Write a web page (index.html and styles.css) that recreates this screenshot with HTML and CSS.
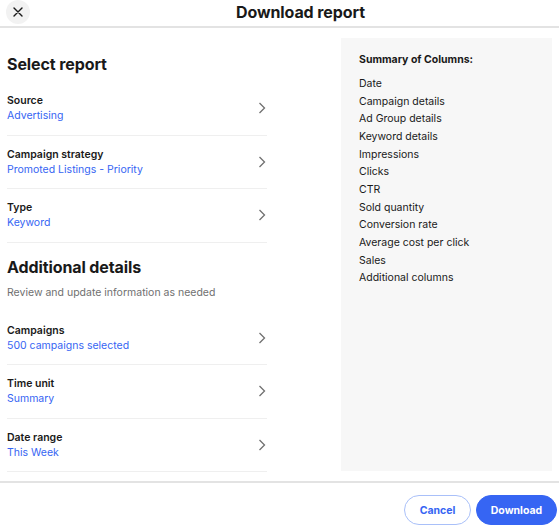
FILE: index.html
```html
<!DOCTYPE html>
<html lang="en">
<head>
    <meta charset="UTF-8">
    <meta name="viewport" content="width=device-width, initial-scale=1.0">
    <title>Download report</title>
    <link rel="stylesheet" href="styles.css">
</head>
<body>
    <header class="dialog-header">
        <button class="close-btn" aria-label="Close">
            <svg width="10" height="10" viewBox="0 0 10 10">
                <path d="M1 1 L9 9 M9 1 L1 9" stroke="#191919" stroke-width="1.4" stroke-linecap="round" fill="none"/>
            </svg>
        </button>
        <h1 class="dialog-title">Download report</h1>
    </header>

    <main class="dialog-body">
        <section class="settings">
            <h2 class="section-title">Select report</h2>

            <div class="setting-row">
                <div class="setting-text">
                    <div class="setting-label">Source</div>
                    <div class="setting-value">Advertising</div>
                </div>
                <svg class="chevron" width="8" height="12" viewBox="0 0 8 12"><path d="M1.5 1 L6.5 6 L1.5 11" /></svg>
            </div>

            <div class="setting-row">
                <div class="setting-text">
                    <div class="setting-label">Campaign strategy</div>
                    <div class="setting-value">Promoted Listings - Priority</div>
                </div>
                <svg class="chevron" width="8" height="12" viewBox="0 0 8 12"><path d="M1.5 1 L6.5 6 L1.5 11" /></svg>
            </div>

            <div class="setting-row">
                <div class="setting-text">
                    <div class="setting-label">Type</div>
                    <div class="setting-value">Keyword</div>
                </div>
                <svg class="chevron" width="8" height="12" viewBox="0 0 8 12"><path d="M1.5 1 L6.5 6 L1.5 11" /></svg>
            </div>

            <h2 class="section-title additional">Additional details</h2>
            <p class="section-hint">Review and update information as needed</p>

            <div class="setting-row">
                <div class="setting-text">
                    <div class="setting-label">Campaigns</div>
                    <div class="setting-value">500 campaigns selected</div>
                </div>
                <svg class="chevron" width="8" height="12" viewBox="0 0 8 12"><path d="M1.5 1 L6.5 6 L1.5 11" /></svg>
            </div>

            <div class="setting-row">
                <div class="setting-text">
                    <div class="setting-label">Time unit</div>
                    <div class="setting-value">Summary</div>
                </div>
                <svg class="chevron" width="8" height="12" viewBox="0 0 8 12"><path d="M1.5 1 L6.5 6 L1.5 11" /></svg>
            </div>

            <div class="setting-row">
                <div class="setting-text">
                    <div class="setting-label">Date range</div>
                    <div class="setting-value">This Week</div>
                </div>
                <svg class="chevron" width="8" height="12" viewBox="0 0 8 12"><path d="M1.5 1 L6.5 6 L1.5 11" /></svg>
            </div>
        </section>

        <aside class="summary">
            <div class="summary-title">Summary of Columns:</div>
            <ul class="summary-list">
                <li>Date</li>
                <li>Campaign details</li>
                <li>Ad Group details</li>
                <li>Keyword details</li>
                <li>Impressions</li>
                <li>Clicks</li>
                <li>CTR</li>
                <li>Sold quantity</li>
                <li>Conversion rate</li>
                <li>Average cost per click</li>
                <li>Sales</li>
                <li>Additional columns</li>
            </ul>
        </aside>
    </main>

    <footer class="dialog-footer">
        <button class="btn btn-secondary">Cancel</button>
        <button class="btn btn-primary">Download</button>
    </footer>
</body>
</html>
```

FILE: styles.css
```css
* {
    margin: 0;
    padding: 0;
    box-sizing: border-box;
}

body {
    font-family: Inter, "Liberation Sans", sans-serif;
    background: white;
    color: #191919;
    width: 559px;
    height: 529px;
    overflow: hidden;
}

/* Header */
.dialog-header {
    height: 28px;
    display: flex;
    align-items: flex-start;
    border-bottom: 2px solid #e3e3e3;
}

.close-btn {
    width: 24px;
    height: 24px;
    margin-left: 6px;
    border: none;
    border-radius: 50%;
    background: #f2f2f2;
    display: flex;
    align-items: center;
    justify-content: center;
}

.dialog-title {
    margin-left: 206px;
    font-size: 16px;
    font-weight: 700;
    line-height: 24px;
    letter-spacing: -0.1px;
}

/* Body */
.dialog-body {
    display: flex;
    align-items: flex-start;
    padding: 0 7px 0 7px;
    height: 455px;
    border-bottom: 2px solid #e3e3e3;
}

.settings {
    width: 260px;
    padding-top: 26px;
}

.section-title {
    font-size: 16px;
    font-weight: 700;
    line-height: 20px;
    letter-spacing: -0.1px;
    margin-bottom: 8px;
}

.section-title.additional {
    margin-top: 14.5px;
    margin-bottom: 0;
}

.section-hint {
    margin-top: 8px;
    margin-bottom: 11.5px;
    font-size: 10.5px;
    line-height: 15px;
    color: #707070;
}

.setting-row {
    display: flex;
    align-items: center;
    justify-content: space-between;
    padding: 11px 1px 11.5px 0;
    border-bottom: 1px solid #efefef;
}

.setting-label {
    font-size: 10.5px;
    font-weight: 600;
    line-height: 15px;
}

.setting-value {
    font-size: 10.5px;
    line-height: 15px;
    color: #3665f3;
}

.chevron {
    fill: none;
    stroke: #707070;
    stroke-width: 1.3;
}

/* Summary panel */
.summary {
    margin-left: 74px;
    margin-top: 10px;
    width: 211px;
    height: 433px;
    background: #f7f7f7;
    padding: 14px 18px;
}

.summary-title {
    font-size: 10.5px;
    font-weight: 700;
    line-height: 15px;
    margin-bottom: 8px;
}

.summary-list {
    list-style: none;
    font-size: 10.5px;
    line-height: 17.65px;
}

/* Footer */
.dialog-footer {
    display: flex;
    justify-content: flex-end;
    gap: 5px;
    padding: 12px 2px 0 0;
}

.btn {
    height: 30px;
    border-radius: 15px;
    font-family: inherit;
    font-size: 10.5px;
    font-weight: 700;
}

.btn-secondary {
    width: 67px;
    background: white;
    color: #3665f3;
    border: 1px solid #a9c0f9;
}

.btn-primary {
    width: 81px;
    background: #3665f3;
    color: white;
    border: 1px solid #3665f3;
}
```
